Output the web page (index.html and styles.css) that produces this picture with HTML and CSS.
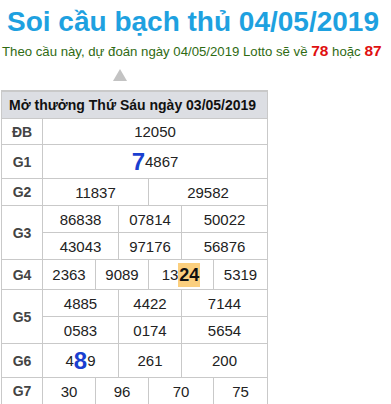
FILE: index.html
```html
<!DOCTYPE html>
<html lang="vi">
<head>
<meta charset="utf-8">
<title>Soi cầu bạch thủ 04/05/2019</title>
<link rel="stylesheet" href="styles.css">
</head>
<body>
<h1 class="title">Soi cầu bạch thủ 04/05/2019</h1>
<p class="subtitle">Theo cầu này, dự đoán ngày 04/05/2019 Lotto sẽ về <b class="hot">78</b> hoặc <b class="hot">87</b></p>
<div class="arrow-row"><span class="arrow"></span></div>
<div class="kq">
  <div class="head span-all">Mở thưởng Thứ Sáu ngày 03/05/2019</div>

  <div class="lbl">ĐB</div>
  <div class="val c2-8">12050</div>

  <div class="lbl">G1</div>
  <div class="val c2-8"><span class="big">7</span>4867</div>

  <div class="lbl">G2</div>
  <div class="val c2-5">11837</div>
  <div class="val c5-8">29582</div>

  <div class="lbl r2">G3</div>
  <div class="val c2-4">86838</div>
  <div class="val c4-6">07814</div>
  <div class="val c6-8">50022</div>
  <div class="val c2-4">43043</div>
  <div class="val c4-6">97176</div>
  <div class="val c6-8">56876</div>

  <div class="lbl">G4</div>
  <div class="val c2-3">2363</div>
  <div class="val c3-5">9089</div>
  <div class="val c5-7">13<span class="mark">24</span></div>
  <div class="val c7-8">5319</div>

  <div class="lbl r2">G5</div>
  <div class="val c2-4">4885</div>
  <div class="val c4-6">4422</div>
  <div class="val c6-8">7144</div>
  <div class="val c2-4">0583</div>
  <div class="val c4-6">0174</div>
  <div class="val c6-8">5654</div>

  <div class="lbl">G6</div>
  <div class="val c2-4">4<span class="big">8</span>9</div>
  <div class="val c4-6">261</div>
  <div class="val c6-8">200</div>

  <div class="lbl">G7</div>
  <div class="val c2-3">30</div>
  <div class="val c3-5">96</div>
  <div class="val c5-7">70</div>
  <div class="val c7-8">75</div>
</div>
</body>
</html>
```
FILE: styles.css
```css
html, body {
  margin: 0;
  padding: 0;
  background: #fff;
}
body {
  font-family: "Liberation Sans", Arial, sans-serif;
  width: 391px;
}
.title {
  margin: 0;
  padding: 6px 5px 0 0;
  text-align: center;
  font-size: 28px;
  line-height: 32px;
  font-weight: bold;
  color: #1ea1e0;
}
.subtitle {
  margin: 4px 0 0 2px;
  font-size: 13.2px;
  line-height: 18px;
  color: #2f6b13;
  white-space: nowrap;
}
.hot {
  color: #e01010;
  font-size: 15.5px;
}
.arrow-row {
  display: flex;
  padding-left: 113px;
  margin-top: 8px;
}
.arrow {
  width: 0;
  height: 0;
  border-left: 7.5px solid transparent;
  border-right: 7.5px solid transparent;
  border-bottom: 12px solid #c3c3c3;
}
.kq {
  margin: 9px 0 0 1px;
  width: 265px;
  display: grid;
  grid-template-columns: 40px 52px 22px 29px 32px 31px 53px;
  grid-template-rows: 26px 25px 33px 26px 26px 26px 29px 26px 26px 33px 26px;
  gap: 1px;
  background: #c9c9c9;
  border: 1px solid #c9c9c9;
  border-top-width: 2px;
  border-bottom-width: 2px;
  font-size: 15px;
  color: #222;
}
.kq > div {
  background: #fff;
  display: flex;
  align-items: center;
  justify-content: center;
}
.kq > .head {
  background: #dcdee3;
  justify-content: flex-start;
  padding-left: 7px;
  font-weight: bold;
  font-size: 14px;
  color: #111;
}
.span-all { grid-column: 1 / 8; }
.lbl {
  grid-column: 1;
  font-weight: bold;
  font-size: 14px;
  color: #444;
}
.kq > .r2 { grid-row: span 2; }
.c2-8 { grid-column: 2 / 8; }
.c2-5 { grid-column: 2 / 5; }
.c5-8 { grid-column: 5 / 8; }
.c2-4 { grid-column: 2 / 4; }
.c4-6 { grid-column: 4 / 6; }
.c6-8 { grid-column: 6 / 8; }
.c2-3 { grid-column: 2 / 3; }
.c3-5 { grid-column: 3 / 5; }
.c5-7 { grid-column: 5 / 7; }
.c7-8 { grid-column: 7 / 8; }
.big {
  color: #1a3fd0;
  font-weight: bold;
  font-size: 24px;
  line-height: 1;
}
.mark {
  background: #fbcf7e;
  font-weight: bold;
  font-size: 18px;
  color: #111;
  padding: 3px 1px;
  line-height: 1;
}
```
